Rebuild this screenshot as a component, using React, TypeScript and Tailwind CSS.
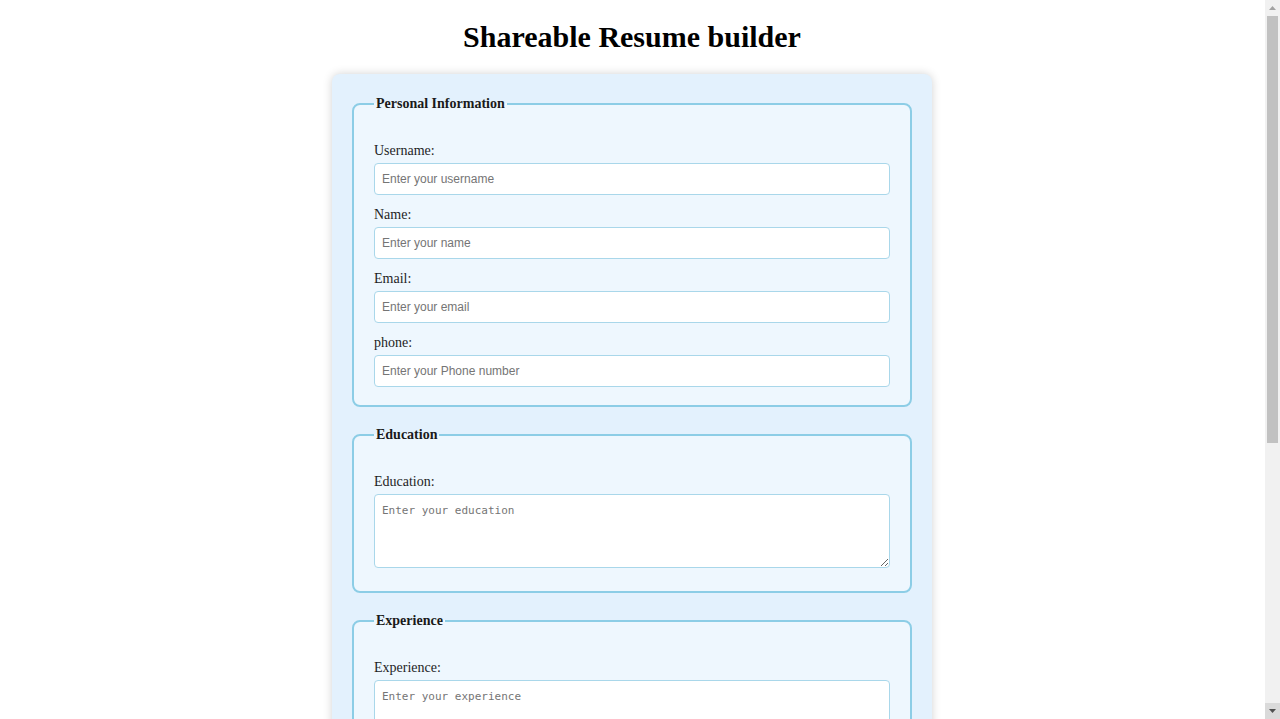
import React from "react";

const serif = { fontFamily: '"Liberation Serif", "Times New Roman", serif' };

function Field({ label, placeholder, first }: { label: string; placeholder: string; first?: boolean }) {
  return (
    <div className="mb-[9px]">
      <label className="block text-[14px] leading-[20px] text-[#1e1e1e] pt-[1px] mb-[2px] font-['Liberation_Serif',serif]">
        {label}
      </label>
      <input
        type="text"
        placeholder={placeholder}
        className="block w-full h-[32px] px-[7px] rounded-[4px] border border-[#a9d7ea] bg-white text-[12px] font-['Liberation_Sans',Arial,sans-serif] placeholder:text-[#757575] outline-none"
      />
    </div>
  );
}

function Area({ label, placeholder }: { label: string; placeholder: string }) {
  return (
    <div className="mb-[14px]">
      <label className="block text-[14px] leading-[20px] text-[#1e1e1e] pt-[1px] mb-[2px] font-['Liberation_Serif',serif]">
        {label}
      </label>
      <textarea
        placeholder={placeholder}
        className="block w-full h-[74px] px-[7px] pt-[9px] pb-[5px] rounded-[4px] border border-[#a9d7ea] bg-white text-[11px] leading-[14px] font-['DejaVu_Sans_Mono',monospace] placeholder:text-[#757575] outline-none"
      />
    </div>
  );
}

function Section({ title, children }: { title: string; children: React.ReactNode }) {
  return (
    <fieldset className="mb-[18px] border-2 border-[#8ccde6] rounded-[8px] bg-[#eef7fe] px-[20px] pt-[26px] pb-[9px] min-w-0">
      <legend className="px-[2px] text-[14px] leading-[20px] font-bold text-[#1a1a1a] font-['Liberation_Serif',serif]">
        {title}
      </legend>
      {children}
    </fieldset>
  );
}

function FakeScrollbar() {
  return (
    <div className="fixed right-0 top-0 z-10 flex h-screen w-[15px] flex-col bg-[#f1f1f1]">
      <div className="flex h-[16px] items-center justify-center">
        <svg width="7" height="4" viewBox="0 0 7 4">
          <path d="M0 4 L3.5 0 L7 4 Z" fill="#a3a3a3" />
        </svg>
      </div>
      <div className="flex-1 px-[2px]">
        <div className="h-[427px] bg-[#c1c1c1]" />
      </div>
      <div className="flex h-[16px] items-center justify-center bg-[#dadada]">
        <svg width="7" height="4" viewBox="0 0 7 4">
          <path d="M0 0 L7 0 L3.5 4 Z" fill="#505050" />
        </svg>
      </div>
    </div>
  );
}

export default function App() {
  return (
    <div className="min-h-screen bg-white pr-[16px] pb-[120px]" style={serif}>
      <FakeScrollbar />
      <h1 className="text-center text-[30px] leading-[34px] font-bold text-black pt-5 mb-5 font-['Liberation_Serif',serif]">
        Shareable Resume builder
      </h1>
      <form className="mx-auto w-[600px] rounded-[8px] bg-[#e3f1fd] p-5 shadow-[0_0_10px_rgba(0,0,0,0.18)]">
        <Section title="Personal Information">
          <Field label="Username:" placeholder="Enter your username" />
          <Field label="Name:" placeholder="Enter your name" />
          <Field label="Email:" placeholder="Enter your email" />
          <Field label="phone:" placeholder="Enter your Phone number" />
        </Section>
        <Section title="Education">
          <Area label="Education:" placeholder="Enter your education" />
        </Section>
        <Section title="Experience">
          <Area label="Experience:" placeholder="Enter your experience" />
        </Section>
        <Section title="Skills">
          <Area label="Skills:" placeholder="Enter your skills" />
        </Section>
        <div className="flex justify-center pb-[20px]">
          <button
            type="submit"
            className="px-5 py-2 rounded-[4px] bg-[#4aa3df] text-white text-[14px] font-['Liberation_Serif',serif]"
          >
            Generate Resume
          </button>
        </div>
      </form>
    </div>
  );
}
